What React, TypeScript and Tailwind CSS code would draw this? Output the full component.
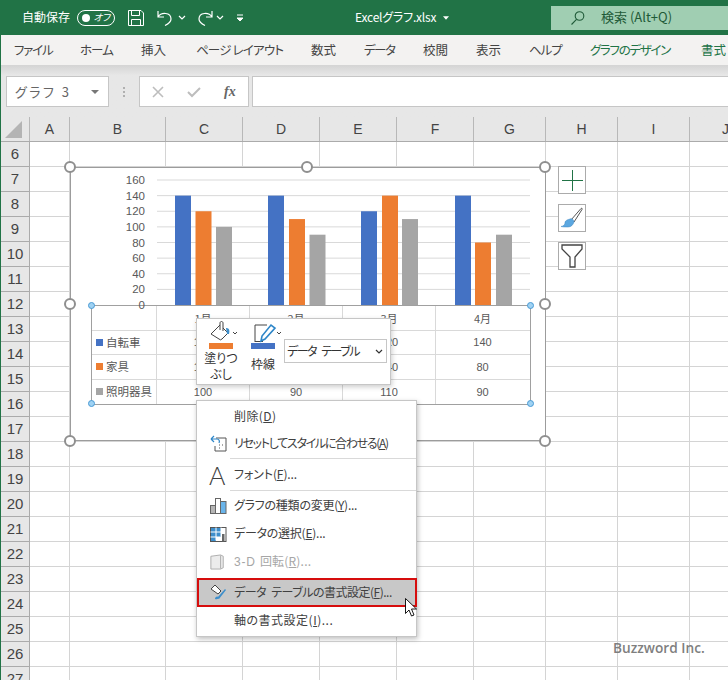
import type { ReactNode } from "react";

const jp = "[font-family:'Noto_Sans_CJK_JP','Liberation_Sans',sans-serif] [font-feature-settings:'palt']";

// column widths of the sheet, row header first
const cols = [
  { label: "", w: "w-[30px]" },
  { label: "A", w: "w-[40px]" },
  { label: "B", w: "w-[96px]" },
  { label: "C", w: "w-[77px]" },
  { label: "D", w: "w-[77px]" },
  { label: "E", w: "w-[77px]" },
  { label: "F", w: "w-[77px]" },
  { label: "G", w: "w-[72px]" },
  { label: "H", w: "w-[72px]" },
  { label: "I", w: "w-[72px]" },
  { label: "J", w: "w-[72px]" },
];

const rows = Array.from({ length: 22 }, (_, i) => i + 6);

const tabs = [
  { t: "ファイル", w: "w-[38px] tracking-[-1.2px]" },
  { t: "ホーム", w: "w-[33px] tracking-[-1px]" },
  { t: "挿入", w: "w-[27px]" },
  { t: "ページ レイアウト", w: "w-[87px] tracking-[-0.8px]" },
  { t: "数式", w: "w-[25px]" },
  { t: "データ", w: "w-[31px] tracking-[-1.5px]" },
  { t: "校閲", w: "w-[25px]" },
  { t: "表示", w: "w-[25px]" },
  { t: "ヘルプ", w: "w-[33px] tracking-[-1px]" },
];

const series = [
  { color: "#4472c4", x: [175, 268, 361, 455], v: [140, 140, 120, 140] },
  { color: "#ed7d31", x: [195.5, 289, 382, 475], v: [120, 110, 140, 80] },
  { color: "#a5a5a5", x: [216, 309.5, 402, 496], v: [100, 90, 110, 90] },
];

const tableRows = [
  { name: "自転車", color: "bg-[#4472c4]", v: [140, 140, 120, 140] },
  { name: "家具", color: "bg-[#ed7d31]", v: [120, 110, 140, 80] },
  { name: "照明器具", color: "bg-[#a5a5a5]", v: [100, 90, 110, 90] },
];

function Chevron({ className }: { className: string }) {
  return (
    <svg viewBox="0 0 8 5" className={className} fill="none" stroke="currentColor" strokeWidth="1.2">
      <path d="M1 1l3 3 3-3" />
    </svg>
  );
}

function Handle({ className }: { className: string }) {
  return <div className={`absolute w-[12px] h-[12px] rounded-full bg-white border-2 border-[#8f8f8f] ${className}`} />;
}

function BlueHandle({ className }: { className: string }) {
  return <div className={`absolute w-[7px] h-[7px] rounded-full bg-[#9fd2f3] border border-[#4a9ad4] ${className}`} />;
}

function MenuRow({ icon, h, muted, track, children }: { icon?: ReactNode; h: string; muted?: boolean; track: string; children: ReactNode }) {
  return (
    <div className={`flex items-center ${h} ${muted ? "text-[#a6a6a6]" : "text-[#404040]"}`}>
      <div className="w-[37px] pl-[13px] flex items-center shrink-0">{icon}</div>
      <span className={`whitespace-nowrap text-[12px] pb-[2px] ${track}`}>{children}</span>
    </div>
  );
}

function ChartIcon() {
  return (
    <svg viewBox="0 0 17 17" className="w-[17px] h-[17px]">
      <rect x="0.5" y="8.5" width="5" height="8" fill="#b5b5b5" stroke="#666" />
      <rect x="5.5" y="1.5" width="5" height="15" fill="#fff" stroke="#666" />
      <rect x="10.5" y="4.5" width="5.5" height="12" fill="#69b4ea" stroke="#666" />
    </svg>
  );
}

export default function App() {
  return (
    <div className={`relative w-[728px] h-[680px] overflow-hidden bg-white border-l border-[#217346] ${jp}`}>
      {/* タイトルバー */}
      <div className="flex items-center h-[35px] bg-[#217346] text-white -ml-px">
        <span className="ml-[22px] w-[48px] pb-[2px] text-[12px] whitespace-nowrap">自動保存</span>
        <div className="ml-[7px] w-[38px] h-[16px] rounded-full border border-white flex items-center justify-between pl-[4px] pr-[4px]">
          <div className="w-[8px] h-[8px] rounded-full bg-white" />
          <span className="text-[9.500px] leading-none italic">オフ</span>
        </div>
        <svg viewBox="0 0 16 16" className="ml-[13px] w-[16px] h-[16px]" fill="none" stroke="#fff" strokeWidth="1">
          <path d="M.5.5h12.5l2.5 2.5v12.5H.5zM3.5.5v5h8v-5M3.5 15.5v-6h9v6" />
        </svg>
        <svg viewBox="0 0 16 16" className="ml-[13px] w-[16px] h-[16px]" fill="none" stroke="#fff" strokeWidth="1.2">
          <path d="M1 1v6h6M1 7c3-5 13-5 13 2 0 3-3 5-6 6.500" />
        </svg>
        <Chevron className="ml-[5px] w-[8px] h-[5px]" />
        <svg viewBox="0 0 16 16" className="ml-[11px] w-[16px] h-[16px]" fill="none" stroke="#fff" strokeWidth="1.2">
          <path d="M15 1v6H9M15 7C12 2 2 2 2 9c0 3 3 5 6 6.500" />
        </svg>
        <Chevron className="ml-[3px] w-[8px] h-[5px]" />
        <svg viewBox="0 0 8 8" className="ml-[12px] w-[8px] h-[8px]" fill="none" stroke="#fff">
          <path d="M1 1h6" />
          <path d="M1 4l3 3 3-3z" fill="#fff" />
        </svg>
        <span className="ml-[111px] w-[82px] pb-[2px] text-[12px] whitespace-nowrap tracking-[-0.2px]">Excelグラフ.xlsx</span>
        <svg viewBox="0 0 7 4" className="ml-[6px] w-[6px] h-[4px]" fill="#fff">
          <path d="M0 0h7L3.500 4z" />
        </svg>
        <div className="ml-[102px] mt-[1px] w-[177px] h-[24px] bg-[#a0ceb2] flex items-center text-[#1f5a38]">
          <svg viewBox="0 0 14 14" className="ml-[20px] w-[14px] h-[14px]" fill="none" stroke="currentColor" strokeWidth="1.1">
            <circle cx="8.500" cy="5" r="4.300" />
            <path d="M5.500 8.300L.5 13.500" />
          </svg>
          <span className="ml-[16px] pb-[2px] text-[13px] whitespace-nowrap">検索 (Alt+Q)</span>
        </div>
      </div>

      {/* リボンのタブ */}
      <div className="flex items-center gap-[28px] h-[30px] pl-[13px] bg-[#f3f2f1] text-[12.500px] text-[#444]">
        {tabs.map((tab) => (
          <span key={tab.t} className={`${tab.w} whitespace-nowrap`}>
            {tab.t}
          </span>
        ))}
        <span className="w-[83px] whitespace-nowrap tracking-[-1.3px] text-[#217346]">グラフのデザイン</span>
        <span className="w-[26px] whitespace-nowrap text-[#217346]">書式</span>
      </div>

      {/* 数式バー */}
      <div className="h-[52px] pt-[11px] bg-gradient-to-b from-[#d4d4d4] from-0% to-[#e7e7e7] to-20%">
        <div className="flex items-stretch h-[31px]">
          <div className="ml-[5px] w-[103px] bg-white border border-[#c6c6c6] flex items-center justify-between pl-[8px] pr-[9px] text-[13px] text-[#666]">
            <span className="tracking-[2.500px] whitespace-nowrap">グラフ 3</span>
            <svg viewBox="0 0 8 4" className="w-[8px] h-[4px]" fill="#777">
              <path d="M0 0h8L4 4z" />
            </svg>
          </div>
          <div className="w-[30px] flex flex-col items-center justify-center gap-[2px]">
            <div className="w-[2px] h-[2px] bg-[#b0b0b0]" />
            <div className="w-[2px] h-[2px] bg-[#b0b0b0]" />
            <div className="w-[2px] h-[2px] bg-[#b0b0b0]" />
          </div>
          <div className="w-[110px] bg-white border border-[#c6c6c6] flex items-center pl-[12px]">
            <svg viewBox="0 0 12 12" className="w-[12px] h-[12px]" fill="none" stroke="#bdbdbd" strokeWidth="1.600">
              <path d="M1 1l10 10M11 1L1 11" />
            </svg>
            <svg viewBox="0 0 14 12" className="ml-[23px] w-[14px] h-[12px]" fill="none" stroke="#bdbdbd" strokeWidth="2">
              <path d="M1 6l4 4 8-8" />
            </svg>
            <span className="ml-[23px] text-[14px] leading-none font-bold italic text-[#666] [font-family:'Liberation_Serif',serif]">fx</span>
          </div>
          <div className="ml-[3px] flex-1 bg-white border border-[#c6c6c6] border-r-0" />
        </div>
      </div>

      {/* シート */}
      <div className="flex h-[25px] bg-[#e7e7e7] border-b border-[#ababab] -ml-px">
        {cols.map((c, i) => (
          <div
            key={c.w + i}
            className={`${c.w} shrink-0 border-r border-[#b8b8b8] flex items-center justify-center text-[14px] text-[#444] [font-family:'Liberation_Sans',sans-serif]`}
          >
            {i === 0 ? (
              <svg viewBox="0 0 17 17" className="w-[17px] h-[17px] ml-[-3px]" fill="#b4b4b4">
                <path d="M17 0v17H0z" />
              </svg>
            ) : (
              c.label
            )}
          </div>
        ))}
      </div>
      {rows.map((r) => (
        <div key={r} className="flex h-[25px]">
          {cols.map((c, i) =>
            i === 0 ? (
              <div
                key={c.w + i}
                className="w-[29px] shrink-0 bg-[#e7e7e7] border-r border-b border-[#ababab] flex items-center justify-center text-[15px] text-[#444] [font-family:'Liberation_Sans',sans-serif]"
              >
                {r}
              </div>
            ) : (
              <div key={c.w + i} className={`${c.w} shrink-0 border-r border-b border-[#d4d4d4]`} />
            )
          )}
        </div>
      ))}

      {/* グラフ本体（シートの上に重なる） */}
      <div className="absolute left-[69px] top-[167px] w-[476px] h-[274px] bg-white border border-[#9c9c9c]">
        <svg viewBox="71 168 474 137" className="block w-[474px] h-[137px] overflow-visible">
          {[0, 20, 40, 60, 80, 100, 120, 140, 160].map((v) => {
            const y = 305 - (v / 160) * 125;
            return (
              <g key={v}>
                {v > 0 && <line x1="157" x2="530" y1={y} y2={y} stroke="#d9d9d9" />}
                <text x="145" y={y + 4} textAnchor="end" fontSize="11.500" fill="#595959" fontFamily="Liberation Sans">
                  {v}
                </text>
              </g>
            );
          })}
          {series.map((s) =>
            s.x.map((x, i) => (
              <rect key={s.color + x} x={x} y={305 - (s.v[i] / 160) * 125} width="16" height={(s.v[i] / 160) * 125} fill={s.color} />
            ))
          )}
        </svg>

        {/* データテーブル */}
        <div className="ml-[20px] w-[440px] border border-[#a0a0a0] text-[#595959]">
          <div className="flex h-[24.500px] border-b border-[#d9d9d9]">
            <div className="w-[65px] border-r border-[#d9d9d9]" />
            {["1月", "2月", "3月", "4月"].map((m) => (
              <div key={m} className="w-[93px] border-r border-[#d9d9d9] last:border-r-0 flex items-center justify-center text-[11px]">
                {m}
              </div>
            ))}
          </div>
          {tableRows.map((row) => (
            <div key={row.name} className="flex h-[24.500px] border-b border-[#d9d9d9] last:border-b-0">
              <div className="w-[65px] border-r border-[#d9d9d9] flex items-center pl-[4px] gap-[3px] text-[11.500px] whitespace-nowrap">
                <div className={`w-[7px] h-[7px] ${row.color}`} />
                {row.name}
              </div>
              {row.v.map((v, i) => (
                <div
                  key={i}
                  className="w-[93px] border-r border-[#d9d9d9] last:border-r-0 flex items-center justify-center text-[11px] [font-family:'Liberation_Sans',sans-serif]"
                >
                  {v}
                </div>
              ))}
            </div>
          ))}
        </div>

        <Handle className="left-[-7px] top-[-7px]" />
        <Handle className="left-[230px] top-[-7px]" />
        <Handle className="left-[468px] top-[-7px]" />
        <Handle className="left-[-7px] top-[130px]" />
        <Handle className="left-[468px] top-[130px]" />
        <Handle className="left-[-7px] top-[267px]" />
        <Handle className="left-[230px] top-[267px]" />
        <Handle className="left-[468px] top-[267px]" />
        <BlueHandle className="left-[17px] top-[134px]" />
        <BlueHandle className="left-[456px] top-[134px]" />
        <BlueHandle className="left-[17px] top-[232px]" />
        <BlueHandle className="left-[456px] top-[232px]" />
      </div>

      {/* グラフ右側のボタン */}
      <div className="absolute left-[557px] top-[166px] flex flex-col gap-[10px]">
        <div className="w-[28px] h-[28px] bg-white border border-[#ababab] flex items-center justify-center">
          <svg viewBox="0 0 21 21" className="w-[21px] h-[21px]" stroke="#217346">
            <path d="M10.500 0v21M0 10.500h21" />
          </svg>
        </div>
        <div className="w-[28px] h-[28px] bg-white border border-[#ababab] flex items-center justify-center">
          <svg viewBox="0 0 24 24" className="w-[24px] h-[24px]">
            <path d="M11 14L21 2.500c1-.5 1.500 0 1 1L14 16z" fill="#fff" stroke="#555" />
            <path d="M10 13c2-1 4 1 4 3-1 3-3 5-6 5-3 0-5 0-7-.5 3-.5 4-2 4-4 0-2 3-3 5-3.500z" fill="#5ba7e0" stroke="#3f86c0" strokeWidth="0.500" />
          </svg>
        </div>
        <div className="w-[28px] h-[28px] bg-white border border-[#ababab] flex items-center justify-center">
          <svg viewBox="0 0 22 24" className="w-[22px] h-[24px]" fill="#fff" stroke="#444" strokeWidth="1.300">
            <path d="M1 1h20v4l-7 8v10H9V13L1 5z" />
          </svg>
        </div>
      </div>

      {/* ミニツールバー */}
      <div className="absolute left-[195px] top-[318px] w-[195px] h-[67px] bg-white border border-[#c6c6c6] shadow-[1px_2px_5px_rgba(0,0,0,0.2)] flex text-[#333]">
        <div className="w-[46px] ml-[1px] flex flex-col items-center text-[12px] leading-[16px]">
          <svg viewBox="0 0 32 24" className="w-[32px] h-[24px] shrink-0 ml-[4px]">
            <path d="M4 15L13 6l8 8-6 6a2 2 0 0 1-3 0z" fill="#fff" stroke="#444" />
            <path d="M13 11V4c0-2 3-2 3 0v8" fill="#fff" stroke="#444" />
            <path d="M19 9c3 0 4 2 3 6h-2z" fill="#3d8ecb" />
            <path d="M26 13l2 2 2-2" fill="none" stroke="#444" />
          </svg>
          <div className="w-[24px] h-[6px] bg-[#ed7d31] shrink-0" />
          <span className="mt-[1px] text-center whitespace-nowrap">塗りつ</span>
          <span className="text-center whitespace-nowrap">ぶし</span>
        </div>
        <div className="w-[38px] flex flex-col items-center text-[12px] leading-[16px]">
          <svg viewBox="0 0 32 24" className="w-[32px] h-[24px] shrink-0 ml-[4px]">
            <path d="M6 23V6h12" fill="none" stroke="#444" />
            <path d="M6 22.500h8" stroke="#444" />
            <path d="M12 22l1-5 9-11 4 3-10 11z" fill="#fff" stroke="#2e86c8" strokeWidth="1.600" />
            <path d="M28 13l2 2 2-2" fill="none" stroke="#444" />
          </svg>
          <div className="w-[24px] h-[6px] bg-[#4472c4] shrink-0" />
          <span className="mt-[7px] whitespace-nowrap">枠線</span>
        </div>
        <div className="ml-[2px] mt-[20px] w-[103px] h-[24px] border border-[#c6c6c6] flex items-center justify-between pl-[2px] pr-[3px] text-[12px]">
          <span className="whitespace-nowrap tracking-[-1.5px] [word-spacing:4px]">データ テーブル</span>
          <Chevron className="w-[8px] h-[5px]" />
        </div>
      </div>

      {/* コンテキストメニュー */}
      <div className="absolute left-[195px] top-[400px] w-[221px] bg-white border border-[#c6c6c6] shadow-[1px_2px_5px_rgba(0,0,0,0.25)] pt-[2px] pb-[1px]">
        <MenuRow h="h-[27px]" track="tracking-[0.4px]">
          削除(<span className="underline">D</span>)
        </MenuRow>
        <MenuRow
          h="h-[27px]"
          track="tracking-[-1.3px]"
          icon={
            <svg viewBox="0 0 17 17" className="w-[17px] h-[17px]" fill="none">
              <path d="M6 3h6l4 0v13H5v-5" stroke="#555" />
              <path d="M1 4l3-3M1 4l3 3M1 4h6c2 0 3 2 2 4" stroke="#2e86c8" strokeWidth="1.200" />
              <path d="M9 10h1M9 13h1M12 10h1" stroke="#555" />
            </svg>
          }
        >
          リセットしてスタイルに合わせる(<span className="underline">A</span>)
        </MenuRow>
        <div className="h-[3px] pt-px pl-[33px]">
          <div className="h-px bg-[#d9d9d9]" />
        </div>
        <MenuRow
          h="h-[30px]"
          track="tracking-[-0.1px]"
          icon={<span className="text-[25px] leading-none font-light text-[#404040] -ml-[1px] [font-family:'Lato',sans-serif]">A</span>}
        >
          フォント(<span className="underline">F</span>)...
        </MenuRow>
        <div className="h-px ml-[33px] bg-[#d9d9d9]" />
        <MenuRow h="h-[29px]" track="tracking-[-0.25px]" icon={<ChartIcon />}>
          グラフの種類の変更(<span className="underline">Y</span>)...
        </MenuRow>
        <MenuRow
          h="h-[28px]"
          track="tracking-[-0.25px]"
          icon={
            <svg viewBox="0 0 17 17" className="w-[17px] h-[17px]">
              <rect x="0.5" y="1.5" width="15.500" height="14" fill="#fff" stroke="#555" />
              <path d="M1 2h10v4H1zM1 6h10v5H1zM1 11h5v4H1z" fill="#3d8ecb" />
              <path d="M6 1.500v13M11 1.500v9M.5 6h11M.5 11h11" stroke="#fff" />
              <rect x="12" y="8" width="2.500" height="7.500" fill="#666" />
            </svg>
          }
        >
          データの選択(<span className="underline">E</span>)...
        </MenuRow>
        <MenuRow
          h="h-[28px]"
          muted
          track="tracking-[0.2px]"
          icon={
            <svg viewBox="0 0 17 17" className="w-[15px] h-[16px]">
              <path d="M1 2l11-1.500 3 1.500v13l-3 1.500H1z" fill="#ececec" stroke="#a6a6a6" />
              <path d="M12 1v15" stroke="#a6a6a6" />
            </svg>
          }
        >
          <span className="[font-family:'Liberation_Sans',sans-serif] tracking-[0.8px]">3-D </span>回転(<span className="underline">R</span>)...
        </MenuRow>
        <div className="h-[2px]" />
        <div className="border-2 border-[#d60d0d] bg-[#c8c8c8] h-[29px] w-[220px] flex items-center text-[#404040] -mr-px">
          <div className="w-[35px] pl-[11px] flex items-center shrink-0">
            <svg viewBox="0 0 17 17" className="w-[17px] h-[17px]">
              <path d="M1 5l4-4 6 6-3 3z" fill="#fff" stroke="#444" />
              <path d="M7 14l8-9 1 1-7 9z" fill="#3d8ecb" />
              <path d="M5 15c0-2 2-3 3-2s0 3-3 2z" fill="#3d8ecb" />
            </svg>
          </div>
          <span className="whitespace-nowrap text-[12px] pb-[2px] tracking-[-0.5px] [word-spacing:3px]">
            データ テーブルの書式設定(<span className="underline">F</span>)...
          </span>
        </div>
        <MenuRow h="h-[28px]" track="tracking-[0.5px]">
          軸の書式設定(<span className="underline">I</span>)...
        </MenuRow>
      </div>

      {/* マウスカーソル */}
      <svg viewBox="0 0 12 19" className="absolute left-[404px] top-[598px] w-[12px] h-[19px]" fill="#fff" stroke="#000" strokeWidth="0.900">
        <path d="M.5.5v15l3.500-3.500 2.500 6 2.500-1-2.500-6h5z" />
      </svg>

      {/* 透かし */}
      <span className="absolute left-[612px] top-[640px] text-[13.700px] leading-[16px] font-semibold text-[#7f7f7f] whitespace-nowrap [font-family:'Open_Sans',sans-serif]">
        Buzzword Inc.
      </span>
    </div>
  );
}
